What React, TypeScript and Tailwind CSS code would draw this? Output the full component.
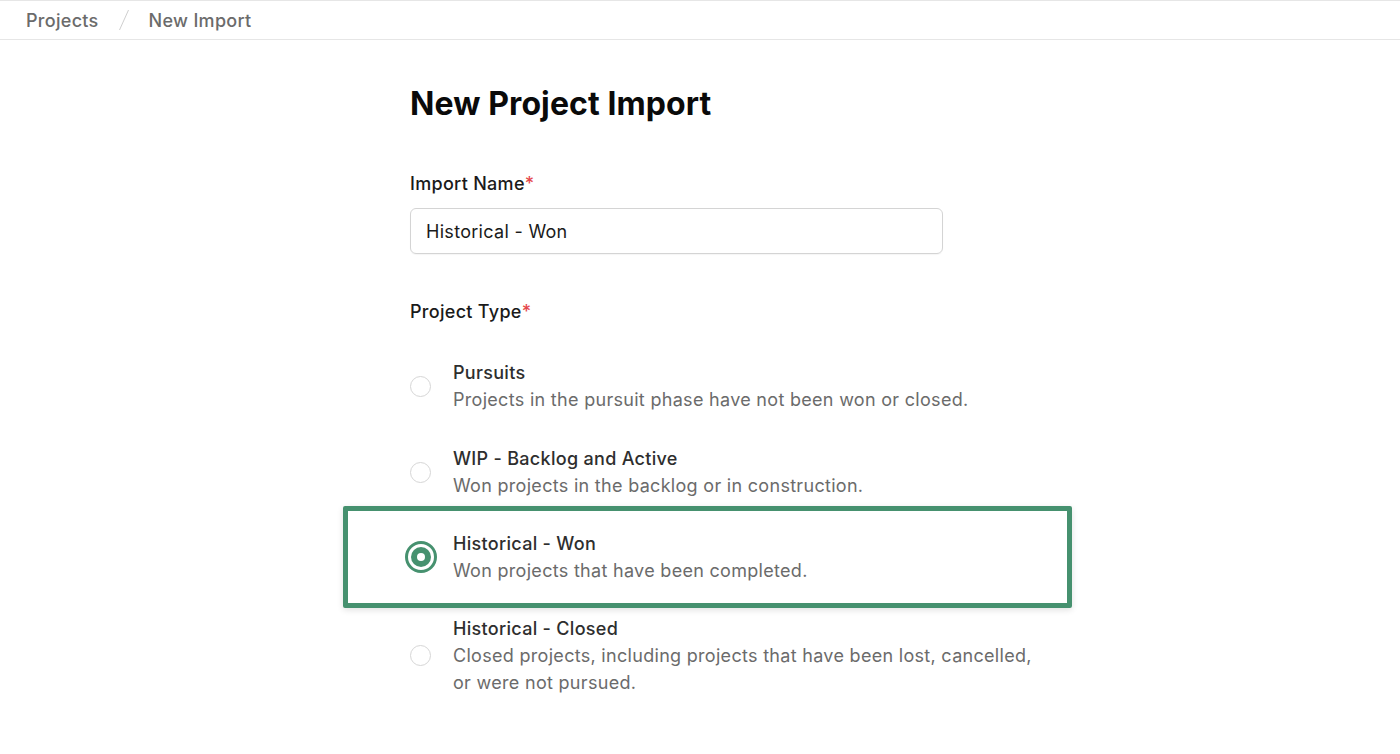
import { useState } from "react";

const types = [
  {
    id: "pursuits",
    title: "Pursuits",
    desc: "Projects in the pursuit phase have not been won or closed.",
  },
  {
    id: "wip",
    title: "WIP - Backlog and Active",
    desc: "Won projects in the backlog or in construction.",
  },
  {
    id: "won",
    title: "Historical - Won",
    desc: "Won projects that have been completed.",
  },
  {
    id: "closed",
    title: "Historical - Closed",
    desc: "Closed projects, including projects that have been lost, cancelled, or were not pursued.",
  },
];

function Radio({ checked }: { checked: boolean }) {
  if (checked) {
    return (
      <svg width="32" height="32" viewBox="0 0 32 32" className="shrink-0">
        <circle cx="16" cy="16" r="14.5" fill="none" stroke="#46916f" strokeWidth="3" />
        <circle cx="16" cy="16" r="10" fill="#46916f" />
        <circle cx="16" cy="16" r="4" fill="#ffffff" />
      </svg>
    );
  }
  return <div className="w-[21px] h-[21px] shrink-0 rounded-full border border-[#d6d6d6] bg-white" />;
}

export default function App() {
  const [name, setName] = useState("Historical - Won");
  const [selected, setSelected] = useState("won");

  return (
    <div className="min-h-[754px] bg-white font-['Inter',sans-serif] text-[18px] tracking-[0.3px]">
      <div className="h-10 border-t border-b border-[#e6e6e6] flex items-center px-[26px] text-[#6b6b6b] font-medium">
        <span>Projects</span>
        <svg width="12" height="22" viewBox="0 0 12 22" className="mx-[19px]">
          <line x1="10.5" y1="1" x2="1.5" y2="21" stroke="#cfcfcf" strokeWidth="1" />
        </svg>
        <span>New Import</span>
      </div>

      <div className="ml-[410px] w-[640px] pt-[44px]">
        <h1 className="text-[32px] leading-10 font-bold text-[#0a0a0a] tracking-[0.1px]">New Project Import</h1>

        <div className="mt-[46px]">
          <label className="block leading-7 font-medium text-[#1a1a1a]">
            Import Name<span className="text-[#e5484d]">*</span>
          </label>
          <input
            value={name}
            onChange={(e) => setName(e.target.value)}
            className="mt-[10px] w-[533px] h-[46px] rounded-md border border-[#d4d4d4] px-[15px] text-[18px] tracking-[0.3px] text-[#1a1a1a] outline-none shadow-[0_1px_1px_rgba(0,0,0,0.04)]"
          />
        </div>

        <div className="mt-[44px]">
          <label className="block leading-7 font-medium text-[#1a1a1a]">
            Project Type<span className="text-[#e5484d]">*</span>
          </label>
          <div className="mt-[33px] flex flex-col gap-8">
            {types.map((t) => {
              const on = t.id === selected;
              return (
                <div
                  key={t.id}
                  onClick={() => setSelected(t.id)}
                  className={
                    on
                      ? "flex items-center -mt-[25px] -mb-[25px] py-[19px] -ml-[67px] pl-[62px] -mr-[22px] border-[5px] border-[#46916f] rounded-[2px] shadow-[0_2px_6px_rgba(0,0,0,0.12)] cursor-pointer"
                      : "flex items-center cursor-pointer"
                  }
                >
                  <div className="w-[21px] h-[21px] flex items-center justify-center">
                    <Radio checked={on} />
                  </div>
                  <div className="ml-[22px] leading-[27px] max-w-[585px]">
                    <div className="font-medium text-[#2e2e2e]">{t.title}</div>
                    <div className="text-[#6b6b6b]">{t.desc}</div>
                  </div>
                </div>
              );
            })}
          </div>
        </div>
      </div>
    </div>
  );
}
